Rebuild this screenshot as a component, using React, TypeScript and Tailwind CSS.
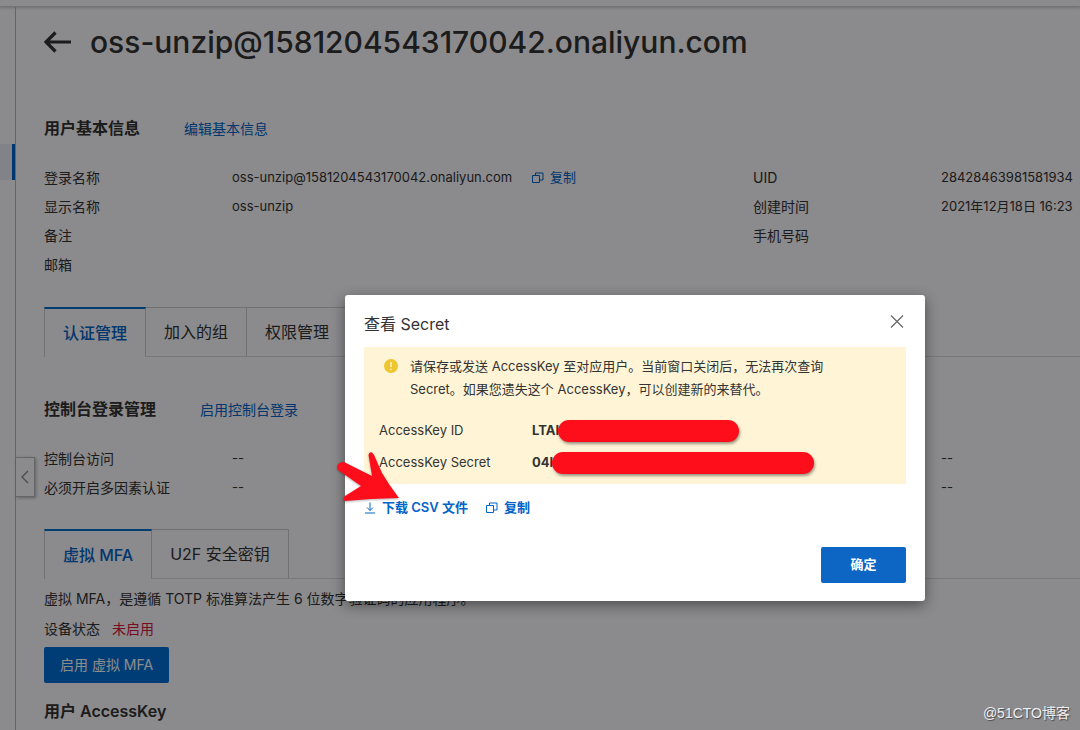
import React, { useState } from 'react';

interface Field {
  label: string;
  value: string;
  copyable?: boolean;
}

const LEFT_INFO: Field[] = [
  { label: '登录名称', value: 'oss-unzip@1581204543170042.onaliyun.com', copyable: true },
  { label: '显示名称', value: 'oss-unzip' },
  { label: '备注', value: '' },
  { label: '邮箱', value: '' },
];

const RIGHT_INFO: Field[] = [
  { label: 'UID', value: '28428463981581934' },
  { label: '创建时间', value: '2021年12月18日 16:23' },
  { label: '手机号码', value: '' },
];

const CONSOLE_LEFT: Field[] = [
  { label: '控制台访问', value: '--' },
  { label: '必须开启多因素认证', value: '--' },
];

const CONSOLE_RIGHT: Field[] = [
  { label: '', value: '--' },
  { label: '', value: '--' },
];

const CopyIcon: React.FC = () => (
  <svg className="h-3 w-3 shrink-0" viewBox="0 0 12 12" fill="none" stroke="currentColor" strokeWidth="1">
    <path d="M.5 3.500h7v7h-7z" />
    <path d="M3.500 3.500v-2.500h7.500v7h-3.500" />
  </svg>
);

const DownloadIcon: React.FC = () => (
  <svg className="h-3 w-3 shrink-0" viewBox="0 0 12 12" fill="none" stroke="currentColor" strokeWidth="1">
    <path d="M6 .5v8M3 5.500l3 3 3-3M1 11h10" />
  </svg>
);

const FieldList: React.FC<{ fields: Field[] }> = ({ fields }) => (
  <dl>
    {fields.map((field, i) => (
      <div key={i} className="flex h-[29px] items-center">
        <dt className="w-47 shrink-0 text-sm">{field.label}</dt>
        <dd className="flex items-center whitespace-nowrap text-[13px]">
          {field.value}
          {field.copyable && (
            <button type="button" className="ml-5 flex items-center gap-1.5 text-[#0064c8]">
              <CopyIcon />
              复制
            </button>
          )}
        </dd>
      </div>
    ))}
  </dl>
);

const Tabs: React.FC<{ items: string[] }> = ({ items }) => {
  const [active, setActive] = useState(0);

  return (
    <div role="tablist" className="flex h-[50px] border-b border-[#dcdadf]">
      {items.map((item, i) => (
        <button
          key={item}
          type="button"
          role="tab"
          aria-selected={i === active}
          onClick={() => setActive(i)}
          className={`-mb-px border-r border-[#cfcdd2] px-[18px] text-base ${
            i === 0 ? 'border-l' : ''
          } ${
            i === active
              ? 'border-t-2 border-t-[#0070cc] bg-[#fdfbff] pb-px font-medium text-[#0064c8]'
              : 'border-t border-b border-b-[#dcdadf]'
          }`}
        >
          {item}
        </button>
      ))}
    </div>
  );
};

const SectionHead: React.FC<{ title: string; link: string }> = ({ title, link }) => (
  <div className="flex items-baseline gap-11">
    <h2 className="text-base leading-6 font-semibold">{title}</h2>
    <a href="#edit" className="text-sm text-[#0064c8]">{link}</a>
  </div>
);

const SecretDialog: React.FC = () => (
  <div
    role="dialog"
    aria-labelledby="secret-title"
    className="absolute left-[345px] top-[295px] w-[580px] rounded-[3px] bg-white px-[19px] pb-[18px] shadow-[0_4px_14px_rgba(0,0,0,0.45)]"
  >
    <div className="flex h-[52px] items-center justify-between">
      <h2 id="secret-title" className="pt-1.5 text-base text-[#333]">查看 Secret</h2>
      <button type="button" aria-label="关闭" className="text-[#666]">
        <svg className="h-[18px] w-[18px]" viewBox="0 0 18 18" fill="none" stroke="currentColor" strokeWidth="1.200">
          <path d="M3 3.500l12 12M15 3.500l-12 12" />
        </svg>
      </button>
    </div>

    <div className="h-[137px] bg-[#fff5d6] pt-2">
      <div className="flex gap-3 pl-5">
        <svg className="mt-1 h-3.5 w-3.5 shrink-0" viewBox="0 0 14 14">
          <circle cx="7" cy="7" r="7" fill="#efc62d" />
          <path d="M7 3v5" stroke="#fff5d6" strokeWidth="1.400" />
          <circle cx="7" cy="10.300" r=".9" fill="#fff5d6" />
        </svg>
        <p className="text-[13px] leading-[23px]">
          请保存或发送 AccessKey 至对应用户。当前窗口关闭后，无法再次查询
          <br />
          Secret。如果您遗失这个 AccessKey，可以创建新的来替代。
        </p>
      </div>
      <dl className="mt-3.5 pl-[15px] text-[13px]">
        <div className="flex h-8 items-center">
          <dt className="w-[153px]">AccessKey ID</dt>
          <dd className="flex items-center font-bold">
            <span className="w-[26px]">LTAI</span>
            <span className="relative h-[22px] w-[181px] rounded-full bg-[#fe0e1b] shadow-[1px_2px_3px_rgba(0,0,0,0.4)]" />
          </dd>
        </div>
        <div className="flex h-8 items-center">
          <dt className="w-[153px]">AccessKey Secret</dt>
          <dd className="flex items-center font-bold">
            <span className="w-5">04I</span>
            <span className="relative h-[22px] w-[262px] rounded-full bg-[#fe0e1b] shadow-[1px_2px_3px_rgba(0,0,0,0.4)]" />
          </dd>
        </div>
      </dl>
    </div>

    <div className="mt-3 flex h-6 items-center gap-[18px] text-[13px] font-semibold text-[#0064c8]">
      <a href="#csv" className="flex items-center gap-1.5">
        <DownloadIcon />
        下载 CSV 文件
      </a>
      <button type="button" className="flex items-center gap-1.5">
        <CopyIcon />
        复制
      </button>
    </div>

    <div className="mt-[27px] flex justify-end">
      <button type="button" className="h-9 w-[85px] rounded-[2px] bg-[#0d65c4] text-[13px] font-bold text-white">
        确定
      </button>
    </div>
  </div>
);

const PointerArrow: React.FC = () => (
  <svg
    className="absolute left-[330px] top-[445px] h-[60px] w-[76px] drop-shadow-[0_1px_1px_rgba(0,0,0,0.3)]"
    viewBox="330 445 76 60"
  >
    <path
      d="M345 462.500L372 476 368.500 455Q369 451.500 372 452.500L374 455 382 473Q389 485 399 498 370 498.500 345 501 342 499 345 496L361 486 338 470C335 466 340 460 345 462.500Z"
      fill="#fe0e1b"
    />
  </svg>
);

const App: React.FC = () => (
  <div className="relative flex h-screen flex-col overflow-hidden bg-[#fdfbff] font-['Inter','Noto_Sans_CJK_SC',sans-serif] text-[#333]">
    <header className="h-[7px] shrink-0 border-b border-[#d4d2d6] shadow-[0_1px_3px_rgba(0,0,0,0.2)]" />

    <div className="flex min-h-0 flex-1">
      <aside className="w-4 shrink-0 border-r border-[#b9b7bc] pt-[137px]">
        <div className="h-9 border-r-[3px] border-[#0064c8] bg-[#eceef8]" />
      </aside>

      <main className="min-w-0 flex-1 px-7">
        <div className="flex h-[70px] items-center gap-[18px]">
          <a href="#back" aria-label="返回">
            <svg className="h-6 w-7" viewBox="0 0 28 24" fill="none" stroke="currentColor" strokeWidth="3.200">
              <path d="M2 12h25M11.500 2.500L2 12l9.500 9.500" />
            </svg>
          </a>
          <h1 className="text-[30px] font-medium">oss-unzip@1581204543170042.onaliyun.com</h1>
        </div>

        <section className="mt-[39px] w-[1418px]">
          <SectionHead title="用户基本信息" link="编辑基本信息" />
          <div className="mt-[23px] grid grid-cols-2">
            <FieldList fields={LEFT_INFO} />
            <FieldList fields={RIGHT_INFO} />
          </div>
        </section>

        <div className="-mr-7 mt-7">
          <Tabs items={['认证管理', '加入的组', '权限管理']} />
        </div>

        <section className="mt-10 w-[1418px]">
          <SectionHead title="控制台登录管理" link="启用控制台登录" />
          <div className="mt-[23px] grid grid-cols-2">
            <FieldList fields={CONSOLE_LEFT} />
            <FieldList fields={CONSOLE_RIGHT} />
          </div>
        </section>

        <div className="-mr-7 mt-[27px]">
          <Tabs items={['虚拟 MFA', 'U2F 安全密钥']} />
        </div>

        <section className="pt-[5px] text-sm">
          <p className="h-[30px] leading-[30px]">虚拟 MFA，是遵循 TOTP 标准算法产生 6 位数字验证码的应用程序。</p>
          <p className="flex h-[30px] items-center gap-3">
            <span>设备状态</span>
            <span className="text-[#d9153c]">未启用</span>
          </p>
          <button type="button" className="mt-[3px] h-9 rounded-[2px] bg-[#0070d8] px-4 text-white">
            启用 虚拟 MFA
          </button>
        </section>

        <h2 className="mt-4 text-base font-semibold">用户 AccessKey</h2>
      </main>
    </div>

    <button
      type="button"
      aria-label="收起"
      className="absolute left-4 top-[457px] flex h-10 w-[19px] items-center justify-center border border-l-0 border-[#b9b7bc] bg-[#fdfbff] text-[#888] shadow-[1px_1px_3px_rgba(0,0,0,0.3)]"
    >
      <svg className="h-3.5 w-2" viewBox="0 0 8 14" fill="none" stroke="currentColor" strokeWidth="1.300">
        <path d="M7 1L1 7l6 6" />
      </svg>
    </button>

    <div className="absolute inset-0 bg-black/45" />
    <SecretDialog />
    <PointerArrow />

    <span className="absolute bottom-[7px] right-2.5 font-['Liberation_Sans','Noto_Sans_CJK_SC',sans-serif] text-sm text-[#f0eff2] [text-shadow:1px_1px_1px_rgba(0,0,0,0.5)]">
      @51CTO博客
    </span>
  </div>
);

export default App;
